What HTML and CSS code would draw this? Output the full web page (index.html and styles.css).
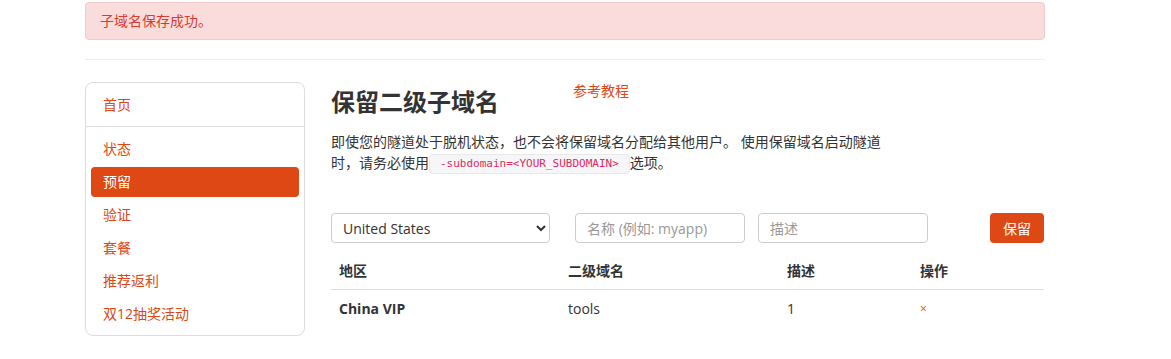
FILE: index.html
```html
<!DOCTYPE html>
<html lang="zh-CN">
  <head>
    <meta charset="UTF-8" />
    <title>保留二级子域名</title>
    <meta name="viewport" content="width=device-width, initial-scale=1.0" />
    <link rel="stylesheet" href="styles.css">
  </head>
  <body>
    <div class="container">
      <div class="alert">子域名保存成功。</div>
      <hr class="divider" />

      <div class="layout">
        <div class="sidebar">
          <a href="#" class="side-home">首页</a>
          <div class="side-list">
            <a href="#" class="side-item">状态</a>
            <a href="#" class="side-item active">预留</a>
            <a href="#" class="side-item">验证</a>
            <a href="#" class="side-item">套餐</a>
            <a href="#" class="side-item">推荐返利</a>
            <a href="#" class="side-item">双12抽奖活动</a>
          </div>
        </div>

        <div class="main">
          <div class="page-head">
            <h1 class="page-title">保留二级子域名</h1>
            <a href="#" class="guide-link">参考教程</a>
          </div>
          <p class="intro">
            即使您的隧道处于脱机状态，也不会将保留域名分配给其他用户。 使用保留域名启动隧道时，请务必使用<code>-subdomain=&lt;YOUR_SUBDOMAIN&gt;</code>选项。
          </p>

          <form class="reserve-form" onsubmit="return false">
            <select class="region-select">
              <option>United States</option>
              <option>China VIP</option>
            </select>
            <input type="text" class="name-input" placeholder="名称 (例如: myapp)" />
            <input type="text" class="desc-input" placeholder="描述" />
            <button class="reserve-btn">保留</button>
          </form>

          <table>
            <thead>
              <tr>
                <th class="col-region">地区</th>
                <th class="col-name">二级域名</th>
                <th class="col-desc">描述</th>
                <th>操作</th>
              </tr>
            </thead>
            <tbody>
              <tr>
                <td class="region">China VIP</td>
                <td>tools</td>
                <td>1</td>
                <td><a href="#" class="remove">&times;</a></td>
              </tr>
            </tbody>
          </table>
        </div>
      </div>
    </div>
  </body>
</html>
```

FILE: styles.css
```css
body {
  margin: 0;
  font-family: "Open Sans", "Noto Sans CJK SC", sans-serif;
  font-size: 14px;
  line-height: 21px;
  color: #333;
  background: #fff;
}
a {
  color: #dd4814;
  text-decoration: none;
}
.container {
  width: 960px;
  margin-left: 85px;
}
.alert {
  margin-top: 2px;
  height: 36px;
  line-height: 36px;
  padding: 0 14px;
  background-color: #fadcdc;
  border: 1px solid #f5c8ca;
  border-radius: 4px;
  color: #dc3a2e;
}
.divider {
  margin: 19px 0 22px;
  border: 0;
  border-top: 1px solid #eee;
}
.layout {
  display: flex;
  align-items: flex-start;
}
.sidebar {
  width: 218px;
  border: 1px solid #ddd;
  border-radius: 8px;
}
.side-home {
  display: block;
  padding: 11px 17px;
  border-bottom: 1px solid #ddd;
}
.side-list {
  display: flex;
  flex-direction: column;
  gap: 3px;
  padding: 7px 5px 6px;
}
.side-item {
  display: block;
  line-height: 30px;
  padding: 0 12px;
  border-radius: 4px;
}
.side-item.active {
  background-color: #dd4814;
  color: #fff;
}
.main {
  width: 714px;
  margin-left: 26px;
}
.page-head {
  display: flex;
  align-items: flex-start;
  margin-top: 3px;
}
.page-title {
  margin: 0;
  font-size: 24px;
  line-height: 34px;
  font-weight: 700;
}
.guide-link {
  margin-left: 74px;
  line-height: 12px;
}
.intro {
  max-width: 556px;
  margin: 12px 0 0;
}
.intro code {
  display: inline-block;
  line-height: 18px;
  padding: 0 10px;
  font-family: "DejaVu Sans Mono", monospace;
  font-size: 11px;
  color: #e3285f;
  background: #f6f6f8;
  border: 1px solid #e9e9ed;
  border-radius: 4px;
  vertical-align: middle;
}
.reserve-form {
  display: flex;
  margin-top: 39px;
}
.reserve-form select,
.reserve-form input {
  height: 30px;
  box-sizing: border-box;
  border: 1px solid #ccc;
  border-radius: 4px;
  font-family: inherit;
  font-size: 14px;
  color: #333;
  background: #fff;
}
.region-select {
  width: 219px;
  padding: 0 7px;
}
.name-input,
.desc-input {
  width: 170px;
  padding: 0 11px;
}
.name-input {
  margin-left: 25px;
}
.desc-input {
  margin-left: 13px;
}
.reserve-form input::placeholder {
  color: #999;
}
.reserve-btn {
  margin-left: 62px;
  width: 54px;
  height: 30px;
  border: none;
  border-radius: 4px;
  background-color: #dd4814;
  color: #fff;
  font-family: inherit;
  font-size: 14px;
  cursor: pointer;
}
table {
  width: 713px;
  margin-top: 9px;
  border-collapse: collapse;
}
th,
td {
  text-align: left;
  padding: 8px;
}
th {
  font-weight: 700;
  border-bottom: 1px solid #ddd;
}
td {
  padding: 7px 8px 9px;
}
.col-region {
  width: 213px;
}
.col-name {
  width: 203px;
}
.col-desc {
  width: 117px;
}
.region {
  font-weight: 700;
}
.remove {
  font-size: 12px;
  color: #e0402e;
}
```
